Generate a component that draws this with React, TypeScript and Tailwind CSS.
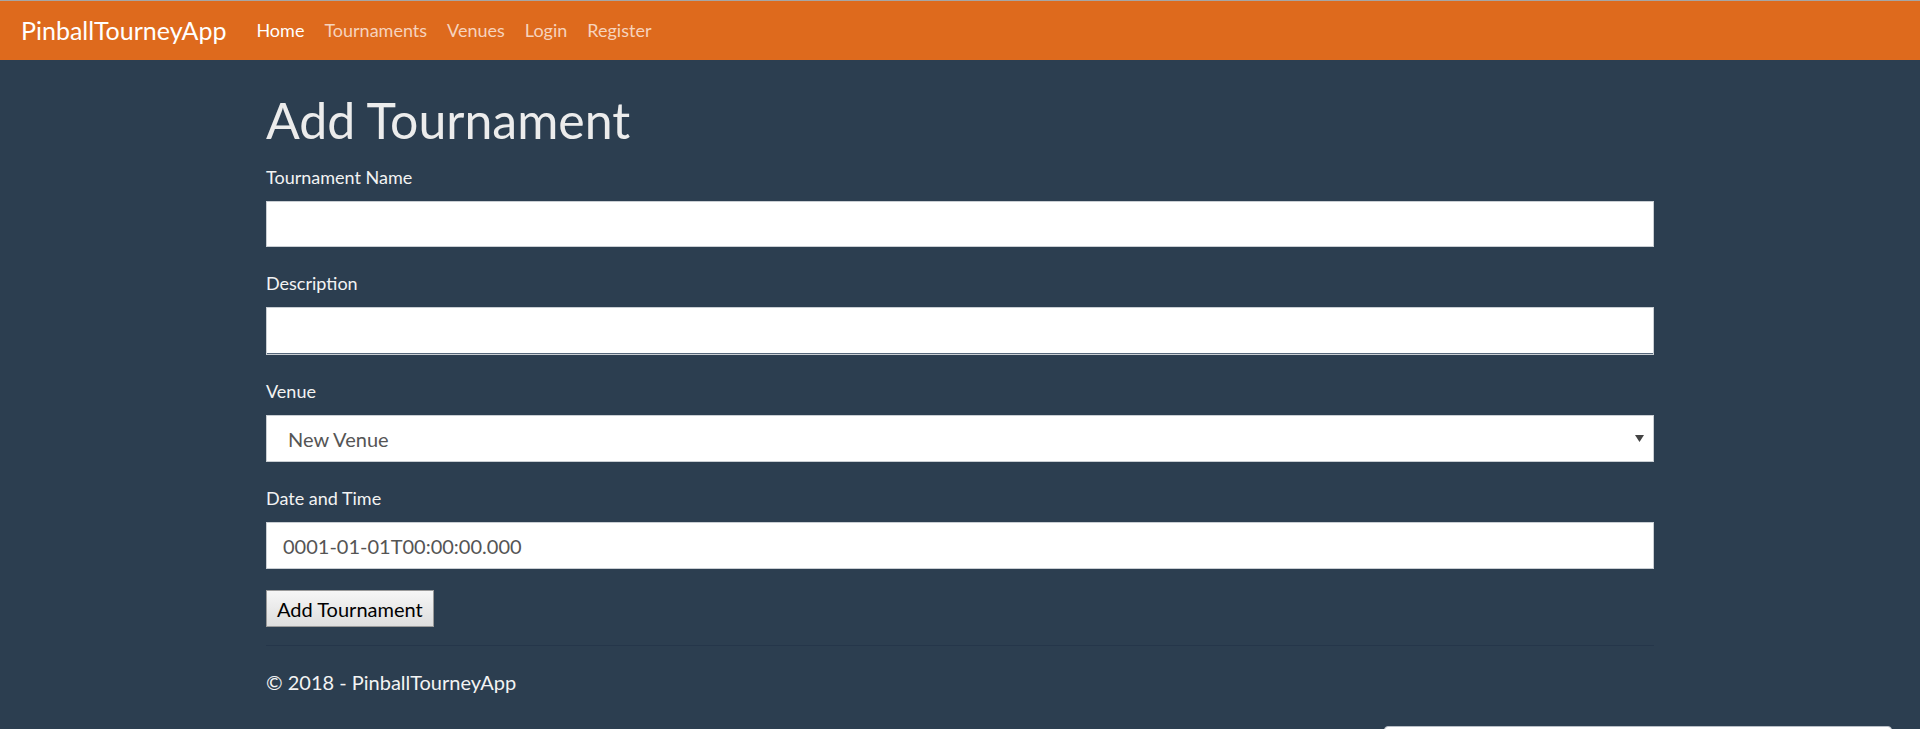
import React from 'react'

const NAV = ['Home', 'Tournaments', 'Venues', 'Login', 'Register']

function Field({ label, children }: { label: string; children: React.ReactNode }) {
  return (
    <div className="mb-[23px]">
      <label className="block text-[18px] leading-[26px] text-[#f3f3f3] mb-[11px]">{label}</label>
      {children}
    </div>
  )
}

export default function App() {
  return (
    <div className="min-h-[729px] bg-[#2c3e50] font-['Lato','Liberation_Sans',sans-serif] relative overflow-hidden">
      <nav className="h-[60px] bg-[#de6a1d] border-t border-[#a6a6a6] flex items-center pl-[21px]">
        <span className="text-[25px] text-white mr-[30px] leading-none">PinballTourneyApp</span>
        <ul className="flex items-center gap-[20px]">
          {NAV.map((n, i) => (
            <li key={n} className={i === 0 ? 'text-white text-[18px]' : 'text-[#f6d3bd] text-[18px]'}>
              {n}
            </li>
          ))}
        </ul>
      </nav>

      <main className="w-[1388px] mx-auto pt-[33px]">
        <h1 className="text-[50px] leading-[1.1] text-[#ececec] mb-[16px]">Add Tournament</h1>
        <form>
          <Field label="Tournament Name">
            <div className="h-[46px] bg-white border border-[#c9ced3]" />
          </Field>
          <Field label="Description">
            <div className="h-[48px] bg-white border border-[#c9ced3] shadow-[inset_0_-1px_0_#56677a]" />
          </Field>
          <Field label="Venue">
            <div className="h-[47px] bg-white border border-[#c9ced3] flex items-center justify-between pl-[21px] pr-[9px] text-[20px] text-[#555]">
              <span>New Venue</span>
              <svg width="9" height="7" viewBox="0 0 9 7">
                <path d="M0 0h9L4.5 7z" fill="#444" />
              </svg>
            </div>
          </Field>
          <div className="mb-[21px]">
            <label className="block text-[18px] leading-[26px] text-[#f3f3f3] mb-[11px]">Date and Time</label>
            <div className="h-[47px] bg-white border border-[#c9ced3] flex items-center pl-[16px] text-[20px] text-[#555]">
              0001-01-01T00:00:00.000
            </div>
          </div>
          <button
            type="button"
            className="h-[37px] px-[10px] text-[20px] text-black bg-gradient-to-b from-[#f6f6f6] to-[#dedede] border border-[#9a9a9a]"
          >
            Add Tournament
          </button>
        </form>
        <hr className="mt-[18px] border-0 border-t border-[#25364a]" />
        <footer className="pt-[22px] text-[20px] leading-[28px] text-[#f3f3f3]">© 2018 - PinballTourneyApp</footer>
      </main>

      <div className="absolute left-[1384px] top-[726px] w-[508px] h-[10px] bg-white rounded-t-[4px] border border-[#b8bec6]" />
    </div>
  )
}
